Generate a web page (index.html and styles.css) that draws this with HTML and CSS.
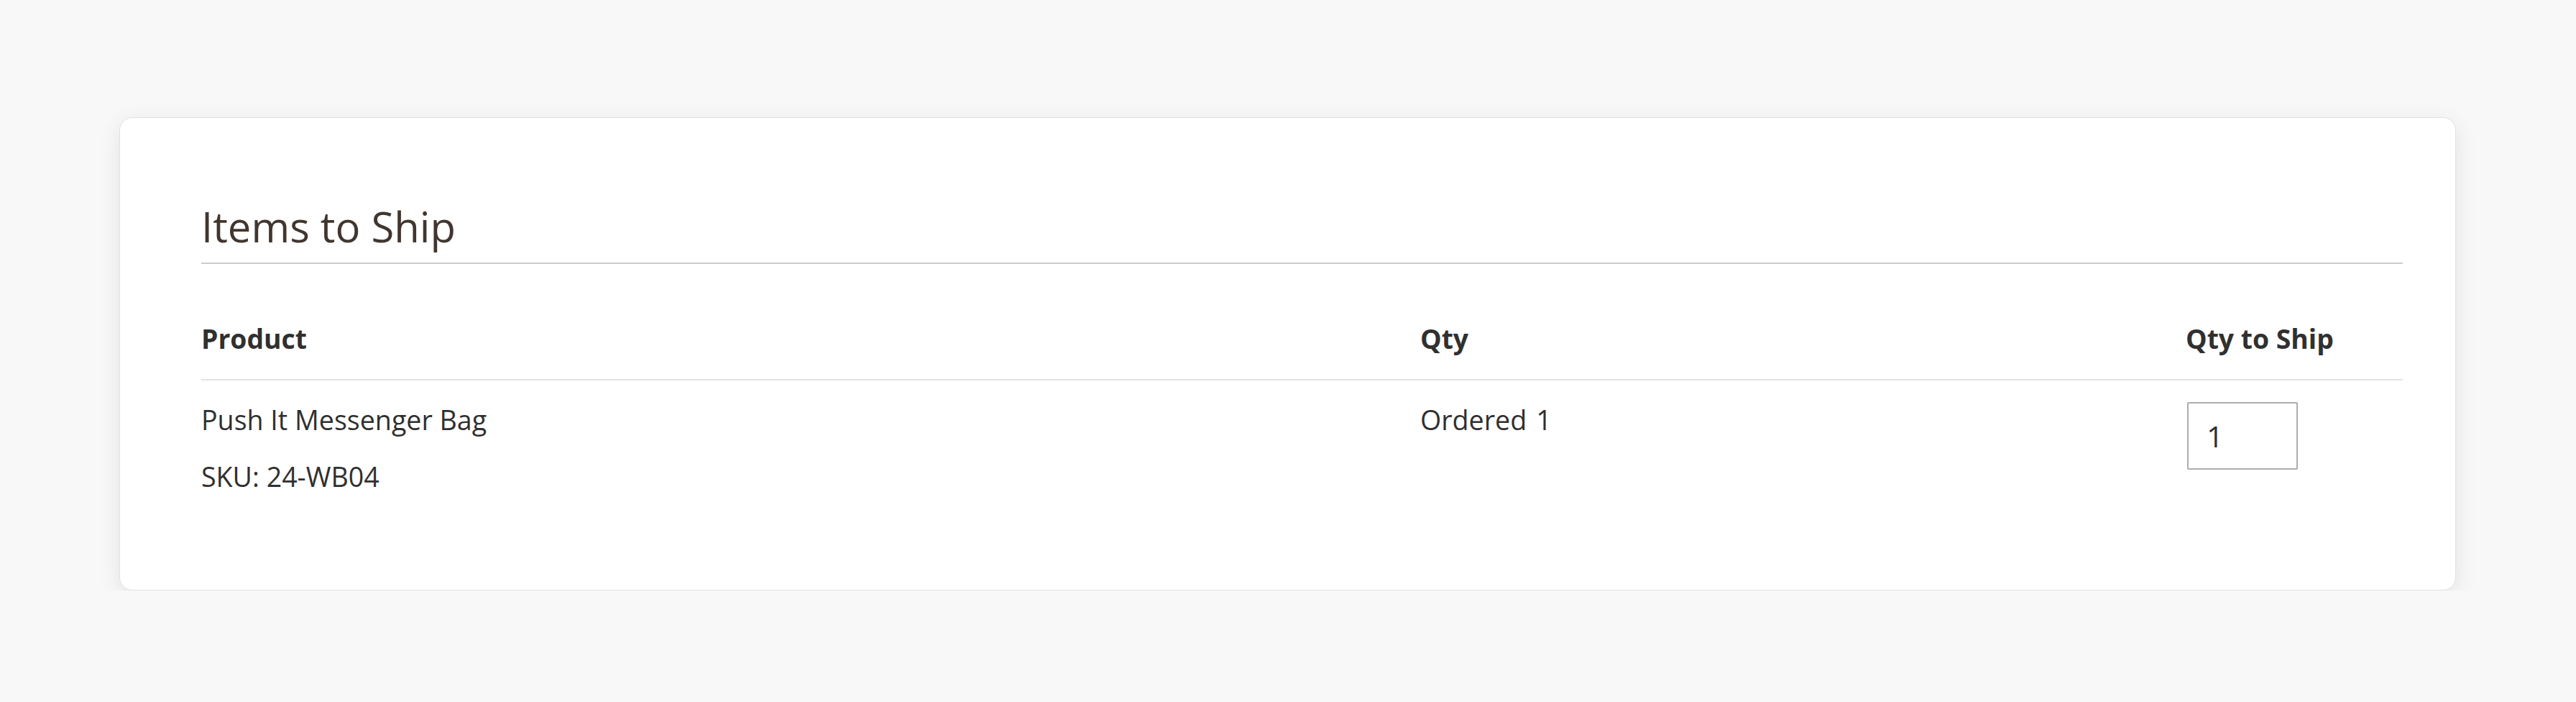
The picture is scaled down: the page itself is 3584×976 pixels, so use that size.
FILE: index.html
```html
<!DOCTYPE html>
<html lang="en">
<head>
<meta charset="utf-8">
<title>Items to Ship</title>
<link rel="stylesheet" href="styles.css">
</head>
<body>
<div class="page">
  <section class="card">
    <h2 class="section-title">Items to Ship</h2>
    <div class="items-table">
      <div class="cell head">Product</div>
      <div class="cell head">Qty</div>
      <div class="cell head">Qty to Ship</div>
      <div class="cell body">
        <div class="line">Push It Messenger Bag</div>
        <div class="line sku">SKU: 24-WB04</div>
      </div>
      <div class="cell body">
        <div class="line">Ordered<span class="qty-num">1</span></div>
      </div>
      <div class="cell body">
        <input class="qty-input" type="text" value="1">
      </div>
    </div>
  </section>
</div>
</body>
</html>
```

FILE: styles.css
```css
html, body {
  margin: 0;
  padding: 0;
  background: #f8f8f8;
}

body {
  font-family: "Open Sans", "Liberation Sans", sans-serif;
  color: #303030;
}

.page {
  padding: 163px 167px 0 166px;
}

.card {
  background: #ffffff;
  border: 1px solid #e1e1e1;
  border-radius: 18px;
  box-shadow: 0 8px 32px rgba(0, 0, 0, 0.09);
  padding: 115px 73px 132px 113px;
}

.section-title {
  margin: 0;
  font-size: 58px;
  line-height: 72px;
  font-weight: 400;
  color: #41362f;
  padding-bottom: 14px;
  border-bottom: 2px solid #cccccc;
}

.items-table {
  display: grid;
  grid-template-columns: 1696px 1065px 1fr;
}

.cell {
  font-size: 37.6px;
  line-height: 50px;
}

.cell.head {
  font-size: 37.3px;
  font-weight: 700;
  padding: 79px 0 31px 0;
  border-bottom: 2px solid #e3e3e3;
}

.cell.body {
  padding: 30px 0 0 0;
}

.line.sku {
  margin-top: 29px;
}

.qty-num {
  margin-left: 13px;
}

.qty-input {
  display: block;
  box-sizing: border-box;
  width: 154px;
  height: 94px;
  margin: 0 0 0 2px;
  border: 2px solid #adadad;
  border-radius: 2px;
  padding: 0 0 0 25px;
  font-family: "Open Sans", "Liberation Sans", sans-serif;
  font-size: 41px;
  color: #303030;
  background: #ffffff;
  outline: none;
}
```
